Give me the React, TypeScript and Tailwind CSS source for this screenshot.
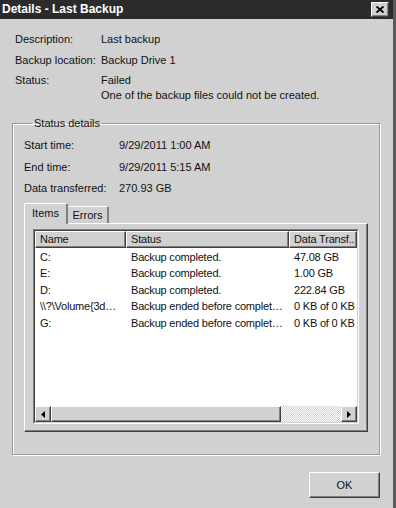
import React from "react";

const rows = [
  { name: "C:", status: "Backup completed.", data: "47.08 GB" },
  { name: "E:", status: "Backup completed.", data: "1.00 GB" },
  { name: "D:", status: "Backup completed.", data: "222.84 GB" },
  { name: "\\\\?\\Volume{3d…", status: "Backup ended before complet…", data: "0 KB of 0 KB" },
  { name: "G:", status: "Backup ended before complet…", data: "0 KB of 0 KB" },
];

const raised =
  "border border-t-white border-l-white border-r-[#404040] border-b-[#404040] shadow-[inset_-1px_-1px_0_#808080]";

function Arrow({ dir }: { dir: "left" | "right" }) {
  return (
    <svg width="4" height="7" viewBox="0 0 4 7">
      {dir === "left" ? <path d="M4 0 L0 3.5 L4 7 Z" fill="#000" /> : <path d="M0 0 L4 3.5 L0 7 Z" fill="#000" />}
    </svg>
  );
}

export default function App() {
  return (
    <div className="w-[396px] h-[508px] bg-[#d1d1d1] border-r-[3px] border-[#5a5a5a] flex flex-col text-[11px] leading-[15px] text-[#111] font-['Liberation_Sans',Arial,sans-serif] overflow-hidden">
      {/* Title bar */}
      <div className="h-[19px] bg-[#2b2b2b] flex items-center justify-between pl-[2px] pr-[4px] shrink-0">
        <span className="text-white font-bold text-[12px]">Details - Last Backup</span>
        <div className={`w-[18px] h-[15px] bg-[#d1d1d1] flex items-center justify-center ${raised}`}>
          <svg width="8" height="7" viewBox="0 0 8 7">
            <path d="M0.5 0.5 L7.5 6.5 M7.5 0.5 L0.5 6.5" stroke="#000" strokeWidth="1.8" />
          </svg>
        </div>
      </div>

      {/* Summary */}
      <div className="grid grid-cols-[86px_1fr] gap-y-[5.5px] pl-[15px] pt-[13px]">
        <span>Description:</span>
        <span>Last backup</span>
        <span>Backup location:</span>
        <span>Backup Drive 1</span>
        <span>Status:</span>
        <div className="flex flex-col">
          <span>Failed</span>
          <span>One of the backup files could not be created.</span>
        </div>
      </div>

      {/* Status details group */}
      <fieldset className="ml-[12px] w-[368px] mt-[13px] border border-[#9a9a9a] shadow-[inset_1px_1px_0_#fff,1px_1px_0_#fff] px-[11px] pt-[7px] pb-[22px]">
        <legend className="ml-[8px] px-[2px]">Status details</legend>
        <div className="grid grid-cols-[95px_1fr] gap-y-[6.5px]">
          <span>Start time:</span>
          <span>9/29/2011 1:00 AM</span>
          <span>End time:</span>
          <span>9/29/2011 5:15 AM</span>
          <span>Data transferred:</span>
          <span>270.93 GB</span>
        </div>

        {/* Tabs */}
        <div className="mt-[7px] flex items-end h-[20px] relative z-10">
          <div className="h-[21px] w-[44px] bg-[#d1d1d1] border-l border-t border-white border-r-2 border-r-[#808080] rounded-t-[2px] flex items-start justify-center pt-[2px] -mb-px">
            Items
          </div>
          <div className="h-[17px] w-[41px] border-t border-white border-r-2 border-r-[#808080] rounded-t-[2px] flex items-center justify-center">
            Errors
          </div>
        </div>
        <div className="h-[209px] border border-t-white border-l-white border-r-[#404040] border-b-[#404040] shadow-[inset_-1px_-1px_0_#808080] pt-[5px] pl-[8px] pr-[8px]">
          {/* List view */}
          <div className="h-[195px] border border-t-[#808080] border-l-[#808080] border-r-white border-b-white">
            <div className="h-full border border-t-[#404040] border-l-[#404040] border-r-[#d1d1d1] border-b-[#d1d1d1] bg-white flex flex-col">
              <div className="flex h-[17px] shrink-0 whitespace-nowrap tracking-[-0.2px]">
                <div className={`w-[91px] bg-[#d1d1d1] pl-[4px] flex items-center ${raised}`}>Name</div>
                <div className={`w-[163px] bg-[#d1d1d1] pl-[4px] flex items-center ${raised}`}>Status</div>
                <div className={`flex-1 bg-[#d1d1d1] pl-[4px] flex items-center overflow-hidden ${raised}`}>Data Transf..</div>
              </div>
              <div className="flex-1 pt-[1px] tracking-[-0.2px]">
                {rows.map((r) => (
                  <div key={r.name} className="flex h-[16.5px] items-center whitespace-nowrap">
                    <span className="w-[91px] pl-[5px] overflow-hidden">{r.name}</span>
                    <span className="w-[163px] pl-[5px] overflow-hidden">{r.status}</span>
                    <span className="pl-[5px]">{r.data}</span>
                  </div>
                ))}
              </div>
              {/* Horizontal scrollbar */}
              <div className="flex h-[16px] shrink-0 bg-[#d1d1d1]">
                <div className={`w-[16px] bg-[#d1d1d1] flex items-center justify-center ${raised}`}>
                  <Arrow dir="left" />
                </div>
                <div className={`w-[230px] bg-[#d1d1d1] ${raised}`} />
                <div className="flex-1 bg-[repeating-conic-gradient(#ffffff_0_25%,#d1d1d1_0_50%)] bg-[length:2px_2px]" />
                <div className={`w-[16px] bg-[#d1d1d1] flex items-center justify-center ${raised}`}>
                  <Arrow dir="right" />
                </div>
              </div>
            </div>
          </div>
        </div>
      </fieldset>

      {/* Footer */}
      <div className="flex justify-end pr-[13px] mt-[17px]">
        <button className={`w-[71px] h-[26px] bg-[#d1d1d1] flex items-center justify-center ${raised}`}>OK</button>
      </div>
    </div>
  );
}
